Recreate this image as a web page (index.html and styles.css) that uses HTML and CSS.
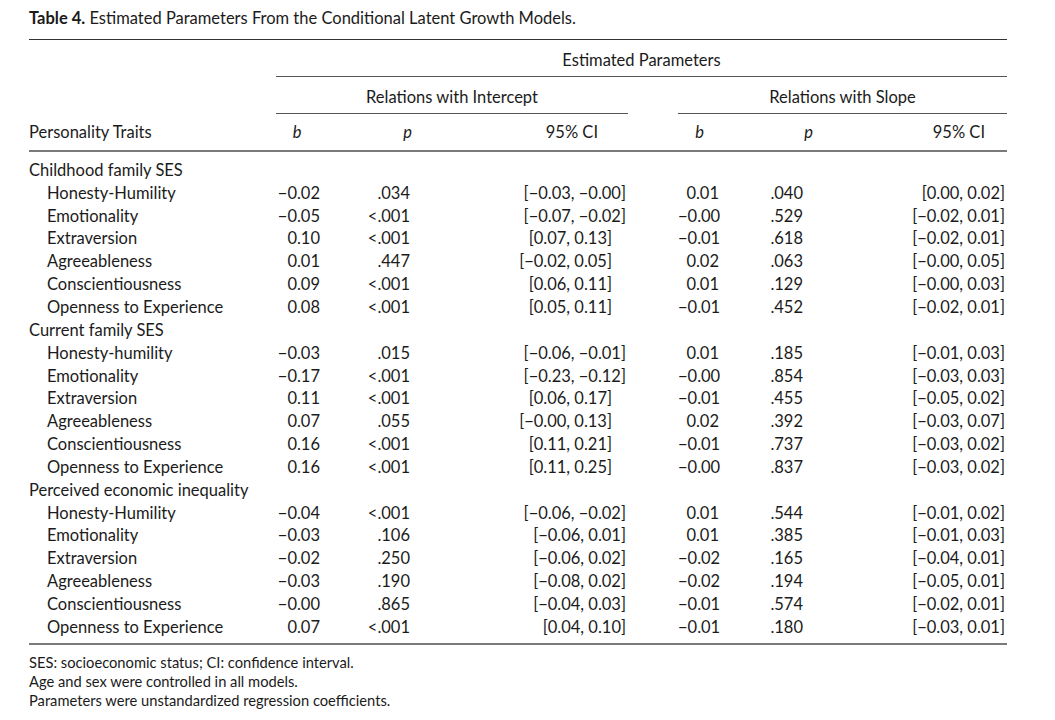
FILE: index.html
```html
<!DOCTYPE html>
<html lang="en">
<head>
<meta charset="utf-8">
<title>Table 4</title>
<link rel="stylesheet" href="styles.css">
</head>
<body>
<div class="page">
  <p class="caption"><span class="label">Table 4.</span> Estimated Parameters From the Conditional Latent Growth Models.</p>
  <table class="data">
    <colgroup>
      <col class="c-label"><col class="c-b1"><col class="c-p1"><col class="c-ci1"><col class="c-gap"><col class="c-b2"><col class="c-p2"><col class="c-ci2">
    </colgroup>
    <thead>
      <tr class="h1">
        <th class="blank"></th>
        <th colspan="7" class="span-ep">Estimated Parameters</th>
      </tr>
      <tr class="h2">
        <th class="blank"></th>
        <th colspan="3" class="span-rel">Relations with Intercept</th>
        <th class="blank"></th>
        <th colspan="3" class="span-rel">Relations with Slope</th>
      </tr>
      <tr class="h3">
        <th class="h-label">Personality Traits</th>
        <th class="h-b1"><i>b</i></th>
        <th class="h-p1"><i>p</i></th>
        <th class="h-ci1">95% CI</th>
        <th></th>
        <th class="h-b2"><i>b</i></th>
        <th class="h-p2"><i>p</i></th>
        <th class="h-ci2">95% CI</th>
      </tr>
    </thead>
    <tbody>
      <tr class="group first"><td colspan="8">Childhood family SES</td></tr>
      <tr><td class="trait">Honesty-Humility</td><td>−0.02</td><td>.034</td><td>[−0.03, −0.00]</td><td></td><td>0.01</td><td>.040</td><td>[0.00, 0.02]</td></tr>
      <tr><td class="trait">Emotionality</td><td>−0.05</td><td>&lt;.001</td><td>[−0.07, −0.02]</td><td></td><td>−0.00</td><td>.529</td><td>[−0.02, 0.01]</td></tr>
      <tr><td class="trait">Extraversion</td><td>0.10</td><td>&lt;.001</td><td class="pos">[0.07, 0.13]</td><td></td><td>−0.01</td><td>.618</td><td>[−0.02, 0.01]</td></tr>
      <tr><td class="trait">Agreeableness</td><td>0.01</td><td>.447</td><td class="pos">[−0.02, 0.05]</td><td></td><td>0.02</td><td>.063</td><td>[−0.00, 0.05]</td></tr>
      <tr><td class="trait">Conscientiousness</td><td>0.09</td><td>&lt;.001</td><td class="pos">[0.06, 0.11]</td><td></td><td>0.01</td><td>.129</td><td>[−0.00, 0.03]</td></tr>
      <tr><td class="trait">Openness to Experience</td><td>0.08</td><td>&lt;.001</td><td class="pos">[0.05, 0.11]</td><td></td><td>−0.01</td><td>.452</td><td>[−0.02, 0.01]</td></tr>
      <tr class="group"><td colspan="8">Current family SES</td></tr>
      <tr><td class="trait">Honesty-humility</td><td>−0.03</td><td>.015</td><td>[−0.06, −0.01]</td><td></td><td>0.01</td><td>.185</td><td>[−0.01, 0.03]</td></tr>
      <tr><td class="trait">Emotionality</td><td>−0.17</td><td>&lt;.001</td><td>[−0.23, −0.12]</td><td></td><td>−0.00</td><td>.854</td><td>[−0.03, 0.03]</td></tr>
      <tr><td class="trait">Extraversion</td><td>0.11</td><td>&lt;.001</td><td class="pos">[0.06, 0.17]</td><td></td><td>−0.01</td><td>.455</td><td>[−0.05, 0.02]</td></tr>
      <tr><td class="trait">Agreeableness</td><td>0.07</td><td>.055</td><td class="pos">[−0.00, 0.13]</td><td></td><td>0.02</td><td>.392</td><td>[−0.03, 0.07]</td></tr>
      <tr><td class="trait">Conscientiousness</td><td>0.16</td><td>&lt;.001</td><td class="pos">[0.11, 0.21]</td><td></td><td>−0.01</td><td>.737</td><td>[−0.03, 0.02]</td></tr>
      <tr><td class="trait">Openness to Experience</td><td>0.16</td><td>&lt;.001</td><td class="pos">[0.11, 0.25]</td><td></td><td>−0.00</td><td>.837</td><td>[−0.03, 0.02]</td></tr>
      <tr class="group"><td colspan="8">Perceived economic inequality</td></tr>
      <tr><td class="trait">Honesty-Humility</td><td>−0.04</td><td>&lt;.001</td><td>[−0.06, −0.02]</td><td></td><td>0.01</td><td>.544</td><td>[−0.01, 0.02]</td></tr>
      <tr><td class="trait">Emotionality</td><td>−0.03</td><td>.106</td><td>[−0.06, 0.01]</td><td></td><td>0.01</td><td>.385</td><td>[−0.01, 0.03]</td></tr>
      <tr><td class="trait">Extraversion</td><td>−0.02</td><td>.250</td><td>[−0.06, 0.02]</td><td></td><td>−0.02</td><td>.165</td><td>[−0.04, 0.01]</td></tr>
      <tr><td class="trait">Agreeableness</td><td>−0.03</td><td>.190</td><td>[−0.08, 0.02]</td><td></td><td>−0.02</td><td>.194</td><td>[−0.05, 0.01]</td></tr>
      <tr><td class="trait">Conscientiousness</td><td>−0.00</td><td>.865</td><td>[−0.04, 0.03]</td><td></td><td>−0.01</td><td>.574</td><td>[−0.02, 0.01]</td></tr>
      <tr class="last"><td class="trait">Openness to Experience</td><td>0.07</td><td>&lt;.001</td><td>[0.04, 0.10]</td><td></td><td>−0.01</td><td>.180</td><td>[−0.03, 0.01]</td></tr>
    </tbody>
  </table>
  <div class="notes">
    <p>SES: socioeconomic status; CI: confidence interval.</p>
    <p>Age and sex were controlled in all models.</p>
    <p>Parameters were unstandardized regression coefficients.</p>
  </div>
</div>
</body>
</html>
```

FILE: styles.css
```css
html, body {
  margin: 0;
  padding: 0;
  background: #ffffff;
}

.page {
  padding: 9px 0 0 29px;
  width: 978px;
  font-family: Lato, "Open Sans", sans-serif;
  color: #1b1b1b;
  font-size: 16.5px;
}

.caption {
  margin: 0;
  height: 30px;
  line-height: 18px;
}

.caption .label {
  font-weight: 700;
}

.data {
  width: 978px;
  table-layout: fixed;
  border-collapse: separate;
  border-spacing: 0;
}

.c-label { width: 247px; }
.c-b1 { width: 46px; }
.c-p1 { width: 90px; }
.c-ci1 { width: 216px; }
.c-gap { width: 50px; }
.c-b2 { width: 43px; }
.c-p2 { width: 92px; }
.c-ci2 { width: 194px; }

.data th,
.data td {
  box-sizing: border-box;
}

.data th {
  font-weight: 400;
  padding: 0;
  line-height: 18px;
}

.h1 th {
  border-top: 1px solid #333;
  height: 38px;
  padding-top: 3px;
}

.span-ep {
  border-bottom: 1px solid #555;
  text-align: center;
}

.h2 th {
  height: 37px;
  padding-top: 3px;
}

.span-rel {
  border-bottom: 1px solid #555;
  text-align: center;
}

.h3 th {
  height: 38px;
  padding-top: 0;
  border-bottom: 2px solid #7a7a7a;
}

.h-label { text-align: left; }
.h-b1 { text-align: center; padding-right: 4px !important; }
.h-p1 { text-align: right; padding-right: 0 !important; }
.h-ci1 { text-align: right; padding-right: 30px !important; }
.h-b2 { text-align: center; padding-right: 0 !important; }
.h-p2 { text-align: right; padding-right: 0 !important; }
.h-ci2 { text-align: right; padding-right: 22px !important; }

.data td {
  height: 22.85px;
  padding: 0 2px 0 0;
  text-align: right;
  white-space: nowrap;
  line-height: 18px;
}

.data td:nth-child(7) {
  padding-right: 10px;
}

.data td.pos {
  padding-right: 16px;
}

.data td.trait {
  text-align: left;
  padding-left: 18px;
}

.data tr.group td {
  text-align: left;
}

.data tr.first td {
  height: 29.35px;
  padding-top: 6.5px;
}

.data tr.last td {
  height: 29.35px;
  padding-bottom: 4.5px;
  border-bottom: 2px solid #7a7a7a;
}

.notes {
  margin-top: 8px;
  font-size: 14.7px;
  line-height: 19px;
}

.notes p {
  margin: 0;
}
```
